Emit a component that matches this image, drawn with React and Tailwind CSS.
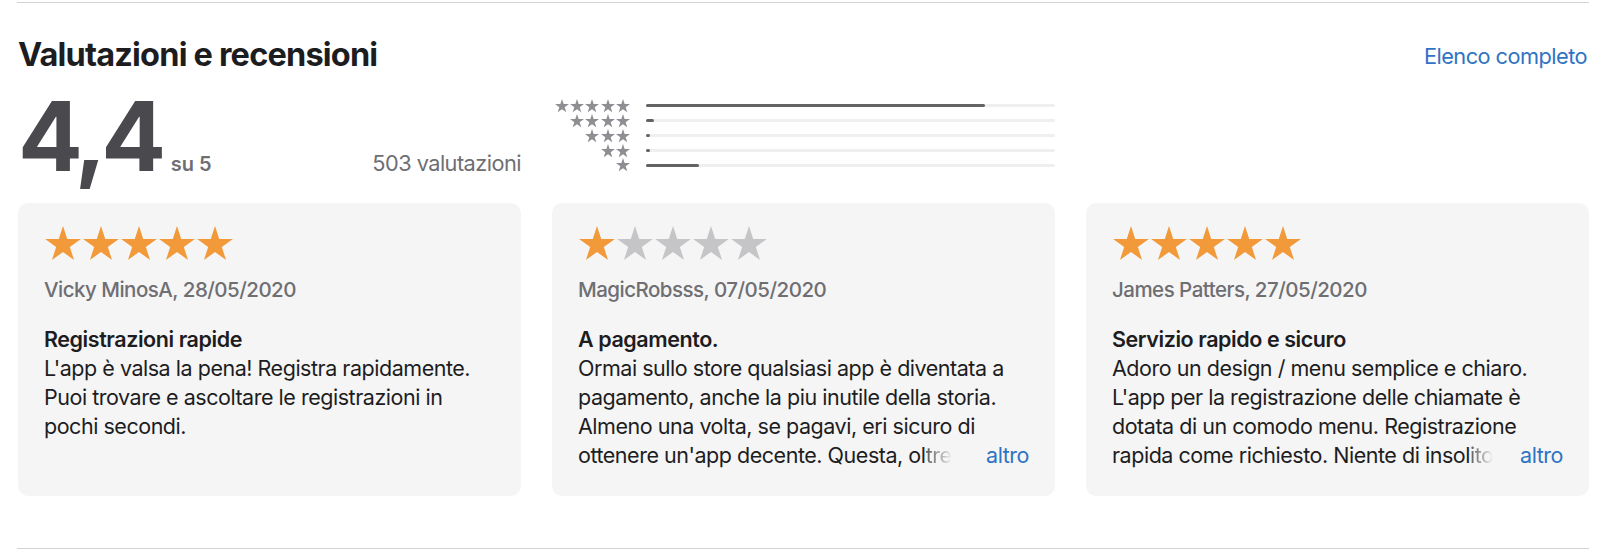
import React from "react";

const STAR_PATH =
  "M12 0 L14.83 8.72 L24 8.72 L16.58 14.11 L19.42 22.83 L12 17.44 L4.58 22.83 L7.42 14.11 L0 8.72 L9.17 8.72 Z";

function Star({ className }) {
  return (
    <svg viewBox="0 0 24 22.83" className={className} aria-hidden="true">
      <path d={STAR_PATH} fill="currentColor" />
    </svg>
  );
}

const histogram = [
  { stars: 5, pct: 83 },
  { stars: 4, pct: 2 },
  { stars: 3, pct: 1 },
  { stars: 2, pct: 1 },
  { stars: 1, pct: 13 },
];

const reviews = [
  {
    rating: 5,
    author: "Vicky MinosA, 28/05/2020",
    title: "Registrazioni rapide",
    lines: [
      "L'app è valsa la pena! Registra rapidamente.",
      "Puoi trovare e ascoltare le registrazioni in",
      "pochi secondi.",
    ],
    last: null,
  },
  {
    rating: 1,
    author: "MagicRobsss, 07/05/2020",
    title: "A pagamento.",
    lines: [
      "Ormai sullo store qualsiasi app è diventata a",
      "pagamento, anche la piu inutile della storia.",
      "Almeno una volta, se pagavi, eri sicuro di",
    ],
    last: { text: "ottenere un'app decente. Questa, ol", fade: "tre" },
  },
  {
    rating: 5,
    author: "James Patters, 27/05/2020",
    title: "Servizio rapido e sicuro",
    lines: [
      "Adoro un design / menu semplice e chiaro.",
      "L'app per la registrazione delle chiamate è",
      "dotata di un comodo menu. Registrazione",
    ],
    last: { text: "rapida come richiesto. Niente di insol", fade: "ito" },
  },
];

function ReviewCard({ review }) {
  return (
    <div className="h-[293px] rounded-[10px] bg-[#f5f5f5] px-[26px] pt-[23px]">
      <div className="flex">
        {[0, 1, 2, 3, 4].map((i) => (
          <Star
            key={i}
            className={
              "w-[38px] h-[34px] " +
              (i < review.rating ? "text-[#f2993a]" : "text-[#c5c5c7]")
            }
          />
        ))}
      </div>
      <div className="mt-[15px] text-[20.5px] leading-[29px] font-medium text-[#6e6e73] tracking-[-0.025em] whitespace-nowrap">
        {review.author}
      </div>
      <div className="mt-[21px] text-[21.5px] leading-[29px] font-semibold text-[#1d1d1f] tracking-[-0.02em] whitespace-nowrap">
        {review.title}
      </div>
      <div className="text-[21.5px] leading-[29px] text-[#1d1d1f] tracking-[-0.022em]">
        {review.lines.map((l, i) => (
          <div key={i} className="whitespace-nowrap">
            {l}
          </div>
        ))}
        {review.last && (
          <div className="flex whitespace-nowrap">
            <span>
              {review.last.text}
              <span className="bg-gradient-to-r from-[#1d1d1f]/70 to-[#f5f5f5] bg-clip-text text-transparent">
                {review.last.fade}
              </span>
            </span>
            <span className="ml-auto text-[#2f73c4]">altro</span>
          </div>
        )}
      </div>
    </div>
  );
}

export default function App() {
  return (
    <div className="w-[1600px] h-[549px] overflow-hidden bg-white font-['Inter',_'Liberation_Sans',_sans-serif]">
      <div className="ml-[18px] w-[1571px] pt-[2px]">
        <div className="border-t border-[#d2d2d7] -ml-[1px]" />
        <div className="flex items-start justify-between pt-[31.5px]">
          <h2 className="text-[32.5px] leading-[40px] font-bold text-[#1d1d1f] tracking-[-0.025em]">
            Valutazioni e recensioni
          </h2>
          <a className="mt-[8px] text-[21.75px] leading-[27px] text-[#2f73c4] tracking-[-0.025em] pr-[2px]">
            Elenco completo
          </a>
        </div>

        <div className="grid grid-cols-3 gap-x-[31px] mt-[13px] h-[96px]">
          <div className="flex items-baseline">
            <span className="text-[96px] leading-[96px] font-bold text-[#4a4a4e] tracking-[-0.055em]">
              4,4
            </span>
            <span className="ml-[10px] text-[20px] font-semibold text-[#6e6e73]">su 5</span>
            <span className="ml-auto text-[21.75px] text-[#6e6e73] tracking-[-0.025em]">
              503 valutazioni
            </span>
          </div>
          <div className="pt-[11px]">
            {histogram.map((row) => (
              <div key={row.stars} className="flex items-center h-[14.8px]">
                <div className="w-[78px] flex justify-end gap-[1.3px]">
                  {Array.from({ length: row.stars }).map((_, i) => (
                    <Star key={i} className="w-[14px] h-[13.3px] text-[#8e8e93]" />
                  ))}
                </div>
                <div className="ml-[16px] flex-1 h-[3px] rounded-full bg-[#efeff0]">
                  <div
                    className="h-full rounded-full bg-[#636366]"
                    style={{ width: row.pct + "%" }}
                  />
                </div>
              </div>
            ))}
          </div>
          <div />
        </div>

        <div className="grid grid-cols-3 gap-x-[31px] mt-[19.5px]">
          {reviews.map((r, i) => (
            <ReviewCard key={i} review={r} />
          ))}
        </div>

        <div className="mt-[52px] border-t border-[#d2d2d7] -ml-[1px]" />
      </div>
    </div>
  );
}
